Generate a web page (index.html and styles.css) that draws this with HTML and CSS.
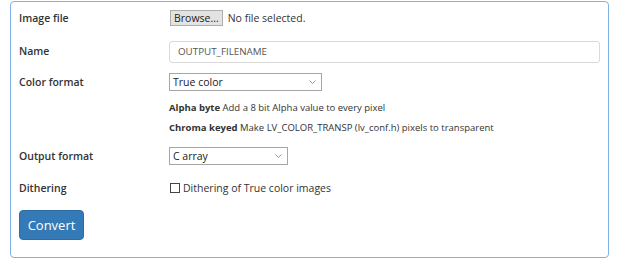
FILE: index.html
```html
<!DOCTYPE html>
<html>
<head>
<meta charset="utf-8">
<link rel="stylesheet" href="styles.css">
</head>
<body>
<form class="panel">
  <div class="row row-file">
    <div class="label">Image file</div>
    <div class="control file">
      <span class="browse">Browse...</span>
      <span class="file-text">No file selected.</span>
    </div>
  </div>
  <div class="row row-name">
    <div class="label">Name</div>
    <div class="control">
      <div class="text-input">OUTPUT_FILENAME</div>
    </div>
  </div>
  <div class="row row-cf">
    <div class="label">Color format</div>
    <div class="control">
      <div class="select select-cf"><span>True color</span><svg class="chev" width="7" height="4" viewBox="0 0 7 4"><path d="M0.5 0.5 L3.5 3.5 L6.5 0.5" fill="none" stroke="#999" stroke-width="1"/></svg></div>
    </div>
  </div>
  <div class="help">
    <p><b>Alpha byte</b> Add a 8 bit Alpha value to every pixel</p>
    <p><b>Chroma keyed</b> Make LV_COLOR_TRANSP (lv_conf.h) pixels to transparent</p>
  </div>
  <div class="row row-of">
    <div class="label">Output format</div>
    <div class="control">
      <div class="select select-of"><span>C array</span><svg class="chev" width="7" height="4" viewBox="0 0 7 4"><path d="M0.5 0.5 L3.5 3.5 L6.5 0.5" fill="none" stroke="#999" stroke-width="1"/></svg></div>
    </div>
  </div>
  <div class="row row-dith">
    <div class="label">Dithering</div>
    <div class="control check"><span class="box"></span><span>Dithering of True color images</span></div>
  </div>
  <div class="actions"><span class="btn">Convert</span></div>
</form>
</body>
</html>
```

FILE: styles.css
```css
html, body { margin: 0; padding: 0; background: #fff; }
body {
  font-family: "Open Sans", "DejaVu Sans", sans-serif;
  color: #333;
  width: 618px;
  height: 259px;
  overflow: hidden;
}
.panel {
  box-sizing: border-box;
  margin: 1px 0 0 10px;
  width: 599px;
  height: 257px;
  border: 1px solid #7eb2e4;
  border-radius: 4px;
  padding: 0 0 0 8px;
}
.row { display: flex; align-items: center; }
.label {
  width: 150px;
  flex: none;
  font-size: 10.5px;
  font-weight: 600;
  color: #333;
}
.control { flex: 1; font-size: 10.5px; }
.row-file { height: 20px; margin-top: 6px; }
.file { display: flex; align-items: center; }
.browse {
  box-sizing: border-box;
  height: 16px;
  padding: 0 3px;
  background: #e3e3e3;
  border: 1px solid #adadad;
  font-size: 10.5px;
  line-height: 14px;
  color: #222;
  margin-left: 1px;
}
.file-text { margin-left: 5px; font-size: 10.5px; color: #333; }
.row-name { margin-top: 13px; height: 22px; align-items: flex-start; }
.row-name .label { margin-top: 3px; }
.text-input {
  box-sizing: border-box;
  width: 431px;
  height: 22px;
  border: 1px solid #d9d9d9;
  border-radius: 3px;
  font-size: 9.8px;
  line-height: 20px;
  padding-left: 8px;
  color: #555;
}
.row-cf { margin-top: 10px; height: 18px; }
.select {
  box-sizing: border-box;
  height: 18px;
  border: 1px solid #a6a6a6;
  display: flex;
  align-items: center;
  justify-content: space-between;
  padding: 0 5px 0 3px;
  font-size: 10.5px;
  color: #222;
}
.select-cf { width: 153px; }
.select-of { width: 119px; }
.chev { flex: none; }
.help {
  margin-left: 150px;
  margin-top: 11px;
  display: flex;
  flex-direction: column;
  gap: 8px;
  font-size: 9.5px;
  color: #333;
}
.help p { margin: 0; line-height: 12px; }
.row-of { margin-top: 13px; height: 18px; }
.row-dith { margin-top: 15px; height: 16px; }
.check { display: flex; align-items: center; font-size: 10.5px; }
.box {
  box-sizing: border-box;
  width: 10px; height: 10px;
  border: 1px solid #444;
  margin: 0 3px 0 1px;
}
.actions { margin-top: 14px; display: flex; }
.btn {
  box-sizing: border-box;
  width: 65px;
  height: 30px;
  background: #337ab7;
  border: 1px solid #2e6da4;
  border-radius: 4px;
  color: #fff;
  font-size: 13px;
  line-height: 28px;
  text-align: center;
}
```
